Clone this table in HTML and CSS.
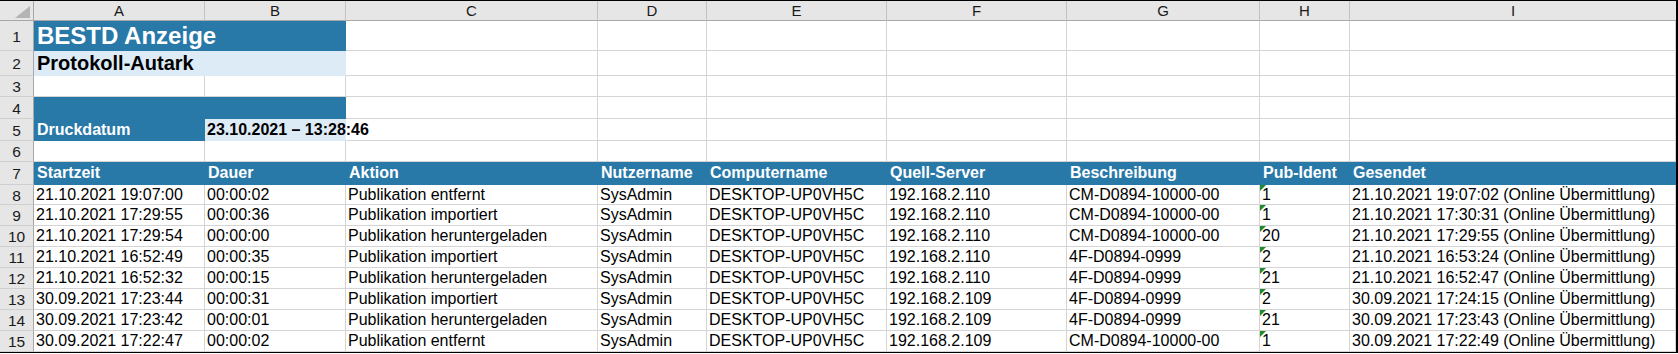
FILE: index.html
```html
<!DOCTYPE html>
<html lang="de">
<head>
<meta charset="utf-8">
<title>BESTD Anzeige</title>
<link rel="stylesheet" href="styles.css">
</head>
<body>
<div class="sheet">
  <div class="corner"><svg width="33" height="19" viewBox="0 0 33 19"><polygon points="15,17 30,17 30,5" fill="#b4b4b4"/></svg></div>
  <div class="colh">A</div><div class="colh">B</div><div class="colh">C</div><div class="colh">D</div><div class="colh">E</div><div class="colh">F</div><div class="colh">G</div><div class="colh">H</div><div class="colh last">I</div>

  <div class="rowh">1</div>
  <div class="c blue title span2">BESTD Anzeige</div><div class="c"></div><div class="c"></div><div class="c"></div><div class="c"></div><div class="c"></div><div class="c"></div><div class="c"></div>

  <div class="rowh">2</div>
  <div class="c light sub span2">Protokoll-Autark</div><div class="c"></div><div class="c"></div><div class="c"></div><div class="c"></div><div class="c"></div><div class="c"></div><div class="c"></div>

  <div class="rowh">3</div>
  <div class="c"></div><div class="c"></div><div class="c"></div><div class="c"></div><div class="c"></div><div class="c"></div><div class="c"></div><div class="c"></div><div class="c"></div>

  <div class="rowh">4</div>
  <div class="c blue span2"></div><div class="c"></div><div class="c"></div><div class="c"></div><div class="c"></div><div class="c"></div><div class="c"></div><div class="c"></div>

  <div class="rowh">5</div>
  <div class="c blue head">Druckdatum</div><div class="c light bold over">23.10.2021 – 13:28:46</div><div class="c"></div><div class="c"></div><div class="c"></div><div class="c"></div><div class="c"></div><div class="c"></div><div class="c"></div>

  <div class="rowh">6</div>
  <div class="c"></div><div class="c"></div><div class="c"></div><div class="c"></div><div class="c"></div><div class="c"></div><div class="c"></div><div class="c"></div><div class="c"></div>

  <div class="rowh">7</div>
  <div class="c blue head">Startzeit</div><div class="c blue head">Dauer</div><div class="c blue head">Aktion</div><div class="c blue head">Nutzername</div><div class="c blue head">Computername</div><div class="c blue head">Quell-Server</div><div class="c blue head">Beschreibung</div><div class="c blue head">Pub-Ident</div><div class="c blue head">Gesendet</div>

  <div class="rowh">8</div>
  <div class="c">21.10.2021 19:07:00</div><div class="c">00:00:02</div><div class="c">Publikation entfernt</div><div class="c">SysAdmin</div><div class="c">DESKTOP-UP0VH5C</div><div class="c">192.168.2.110</div><div class="c">CM-D0894-10000-00</div><div class="c txt">1</div><div class="c">21.10.2021 19:07:02 (Online Übermittlung)</div>

  <div class="rowh">9</div>
  <div class="c">21.10.2021 17:29:55</div><div class="c">00:00:36</div><div class="c">Publikation importiert</div><div class="c">SysAdmin</div><div class="c">DESKTOP-UP0VH5C</div><div class="c">192.168.2.110</div><div class="c">CM-D0894-10000-00</div><div class="c txt">1</div><div class="c">21.10.2021 17:30:31 (Online Übermittlung)</div>

  <div class="rowh">10</div>
  <div class="c">21.10.2021 17:29:54</div><div class="c">00:00:00</div><div class="c">Publikation heruntergeladen</div><div class="c">SysAdmin</div><div class="c">DESKTOP-UP0VH5C</div><div class="c">192.168.2.110</div><div class="c">CM-D0894-10000-00</div><div class="c txt">20</div><div class="c">21.10.2021 17:29:55 (Online Übermittlung)</div>

  <div class="rowh">11</div>
  <div class="c">21.10.2021 16:52:49</div><div class="c">00:00:35</div><div class="c">Publikation importiert</div><div class="c">SysAdmin</div><div class="c">DESKTOP-UP0VH5C</div><div class="c">192.168.2.110</div><div class="c">4F-D0894-0999</div><div class="c txt">2</div><div class="c">21.10.2021 16:53:24 (Online Übermittlung)</div>

  <div class="rowh">12</div>
  <div class="c">21.10.2021 16:52:32</div><div class="c">00:00:15</div><div class="c">Publikation heruntergeladen</div><div class="c">SysAdmin</div><div class="c">DESKTOP-UP0VH5C</div><div class="c">192.168.2.110</div><div class="c">4F-D0894-0999</div><div class="c txt">21</div><div class="c">21.10.2021 16:52:47 (Online Übermittlung)</div>

  <div class="rowh">13</div>
  <div class="c">30.09.2021 17:23:44</div><div class="c">00:00:31</div><div class="c">Publikation importiert</div><div class="c">SysAdmin</div><div class="c">DESKTOP-UP0VH5C</div><div class="c">192.168.2.109</div><div class="c">4F-D0894-0999</div><div class="c txt">2</div><div class="c">30.09.2021 17:24:15 (Online Übermittlung)</div>

  <div class="rowh">14</div>
  <div class="c">30.09.2021 17:23:42</div><div class="c">00:00:01</div><div class="c">Publikation heruntergeladen</div><div class="c">SysAdmin</div><div class="c">DESKTOP-UP0VH5C</div><div class="c">192.168.2.109</div><div class="c">4F-D0894-0999</div><div class="c txt">21</div><div class="c">30.09.2021 17:23:43 (Online Übermittlung)</div>

  <div class="rowh">15</div>
  <div class="c">30.09.2021 17:22:47</div><div class="c">00:00:02</div><div class="c">Publikation entfernt</div><div class="c">SysAdmin</div><div class="c">DESKTOP-UP0VH5C</div><div class="c">192.168.2.109</div><div class="c">CM-D0894-10000-00</div><div class="c txt">1</div><div class="c">30.09.2021 17:22:49 (Online Übermittlung)</div>
</div>
</body>
</html>
```

FILE: styles.css
```css
html, body {
  margin: 0;
  padding: 0;
  background: #ffffff;
}

body {
  font-family: "Liberation Sans", Arial, sans-serif;
  font-size: 16px;
  color: #000;
  width: 1678px;
  height: 354px;
  overflow: hidden;
}

.sheet {
  display: grid;
  grid-template-columns: 34px 171px 141px 252px 109px 180px 180px 193px 90px 326px;
  grid-template-rows: 20px 30px 25px 21px 22px 22px 21px 23px 20px repeat(7, 21px);
  width: 1676px;
  border-top: 1px solid #000;
  border-right: 2px solid #000;
  border-bottom: 1px solid #000;
}

.corner {
  background: #e6e6e6;
  border-right: 1px solid #a8a8a8;
  border-bottom: 1px solid #a8a8a8;
  box-sizing: border-box;
  line-height: 0;
}

.colh {
  background: #e6e6e6;
  border-right: 1px solid #c2c2c2;
  border-bottom: 1px solid #a8a8a8;
  box-sizing: border-box;
  display: flex;
  align-items: center;
  justify-content: center;
  font-size: 15px;
  color: #1a1a1a;
  line-height: 17px;
}

.colh.last {
  border-right: none;
}

.rowh {
  background: #e6e6e6;
  border-right: 1px solid #a8a8a8;
  border-bottom: 1px solid #cfcfcf;
  box-sizing: border-box;
  display: flex;
  align-items: center;
  justify-content: center;
  font-size: 15.5px;
  color: #1a1a1a;
  line-height: 17px;
  padding-top: 1px;
}

.c {
  position: relative;
  box-sizing: border-box;
  border-right: 1px solid #d4d4d4;
  border-bottom: 1px solid #d4d4d4;
  display: flex;
  align-items: center;
  padding: 0 2px;
  white-space: nowrap;
  line-height: 18px;
  min-width: 0;
}

.span2 {
  grid-column: span 2;
}

.blue {
  background: #2878a8;
  border-color: #2878a8;
  color: #fff;
}

.light {
  background: #ddebf7;
  border-color: #ddebf7;
}

.title {
  font-size: 24px;
  font-weight: bold;
  line-height: 27px;
  padding-left: 3px;
}

.sub {
  font-size: 20px;
  font-weight: bold;
  line-height: 23px;
  padding-left: 3px;
}

.head {
  font-weight: bold;
  padding-left: 3px;
}

.bold {
  font-weight: bold;
}

.over {
  overflow: visible;
  z-index: 1;
}

.txt::before {
  content: "";
  position: absolute;
  left: 0;
  top: 0;
  width: 6px;
  height: 6px;
  background: #1f8a2e;
  clip-path: polygon(0 0, 100% 0, 0 100%);
}
```
